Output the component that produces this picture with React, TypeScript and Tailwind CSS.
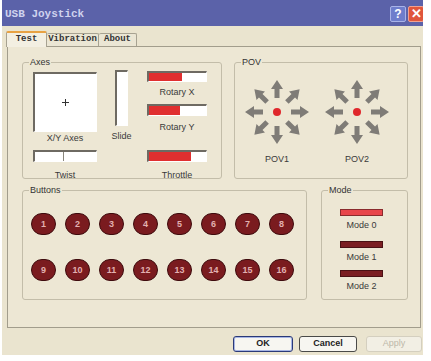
import React from 'react';

const axisLabel = "h-[10px] leading-[10px] text-[9px] text-[#3a3a3a] text-center whitespace-nowrap";

// sunken bar with red fill (rotary / throttle)
const Bar = ({ pct, className }: { pct: number; className: string }) => (
  <div className={`${className} border-t-2 border-l-2 border-t-[#6e6a62] border-l-[#6e6a62] border-b border-r border-b-white border-r-white bg-white flex`}>
    <div className="h-full bg-[#e02f2f]" style={{ width: `${pct}%` }} />
  </div>
);

const Group = ({ title, className, children }: { title: string; className: string; children: React.ReactNode }) => (
  <fieldset className={`${className} border border-[#c3bda9] rounded-[3px] min-w-0`}>
    <legend className="ml-[6px] px-[1px] h-[10px] leading-[10px] text-[9px] text-[#333]">{title}</legend>
    {children}
  </fieldset>
);

const Pov = () => {
  const arrow = "M -2.5 -14 L 2.5 -14 L 2.5 -23 L 6 -23 L 0 -32 L -6 -23 L -2.5 -23 Z";
  return (
    <svg width="70" height="70" viewBox="-35 -35 70 70">
      {[0, 45, 90, 135, 180, 225, 270, 315].map((a) => (
        <path key={a} d={arrow} fill="#7f7c77" transform={`rotate(${a})`} />
      ))}
      <circle cx="0" cy="0" r="4" fill="#e0282c" />
    </svg>
  );
};

const Circle = ({ n }: { n: number }) => (
  <div className="w-[25px] h-[22px] rounded-full bg-[#7a1b1f] border border-[#3e0b0d] flex items-center justify-center text-[9px] font-bold text-[#e2b0b0] leading-none">
    {n}
  </div>
);

const ModeBar = ({ on }: { on?: boolean }) => (
  <div className={`w-[43px] h-[7px] border ${on ? 'bg-[#e8464b] border-[#8a2b2d]' : 'bg-[#7b1e22] border-[#4a1114]'}`} />
);

export default function App() {
  return (
    <div className="w-[431px] h-[361px] bg-white overflow-hidden font-['Liberation_Sans',Arial,sans-serif]">
      <div className="ml-[2px] w-[421px] h-[355px] bg-[#eae4cf] flex flex-col overflow-hidden">
        {/* title bar */}
        <div className="h-[26px] shrink-0 bg-[#5b62a9] flex items-center pl-[3px]">
          <span className="font-['Liberation_Mono',monospace] font-bold text-[11px] text-[#cfd2ee] mt-[3px]">USB Joystick</span>
          <div className="ml-auto mr-[-1px] flex items-center gap-[2px] mt-[1px]">
            <div className="w-[16px] h-[16px] rounded-[2px] bg-[#6e7dcc] border border-[#a9b3e8] flex items-center justify-center text-white font-bold text-[12px] leading-none">?</div>
            <div className="w-[16px] h-[16px] rounded-[2px] bg-[#e0563c] border border-[#f0a090] flex items-center justify-center text-white font-bold text-[13px] leading-none">✕</div>
          </div>
        </div>

        {/* tabs */}
        <div className="h-[20px] shrink-0 flex items-end pl-[4px] font-['Liberation_Mono',monospace] font-bold text-[9px] text-[#333]">
          <div className="relative z-10 w-[41px] h-[16px] mb-[-1px] bg-[#f3efe2] border-x border-[#a7a291] border-t-2 border-t-[#e8a243] rounded-t-[2px] flex items-center justify-center">Test</div>
          <div className="w-[52px] h-[13px] bg-[#ebe6d4] border-t border-r border-[#a7a291] rounded-t-[2px] flex items-center justify-center">Vibration</div>
          <div className="w-[38px] h-[13px] bg-[#ebe6d4] border-t border-r border-[#a7a291] rounded-t-[2px] flex items-center justify-center">About</div>
        </div>

        {/* tab panel */}
        <div className="ml-[5px] w-[414px] h-[282px] shrink-0 bg-[#ede7d4] border border-[#a29d8c] pl-[14px] pt-[10px] flex flex-col gap-[6px]">
          <div className="flex gap-[12px]">
            <Group title="Axes" className="w-[200px] h-[122px]">
              <div className="flex pl-[10px]">
                <div className="w-[64px] flex flex-col">
                  <div className="mt-[5px] h-[60px] bg-white border-t-2 border-l-2 border-t-[#6e6a62] border-l-[#6e6a62] border-b border-r border-b-white border-r-white flex items-center justify-center">
                    <svg width="7" height="7" viewBox="0 0 7 7"><path d="M3.5 0v7M0 3.5h7" stroke="#333" strokeWidth="1" /></svg>
                  </div>
                  <div className={`${axisLabel} mt-[1px]`}>X/Y Axes</div>
                  <div className="mt-[7px] h-[12px] border-t-2 border-l-2 border-t-[#6e6a62] border-l-[#6e6a62] border-b border-r border-b-white border-r-white bg-white flex">
                    <div className="w-[29px] h-full border-r border-[#8a867c]" />
                  </div>
                  <div className={`${axisLabel} mt-[8px]`}>Twist</div>
                </div>
                <div className="ml-[18px] w-[13px] flex flex-col items-center">
                  <div className="mt-[3px] w-[13px] h-[56px] bg-white border-t-2 border-l-2 border-t-[#6e6a62] border-l-[#6e6a62] border-b border-r border-b-white border-r-white" />
                  <div className={`${axisLabel} mt-[5px]`}>Slide</div>
                </div>
                <div className="ml-[19px] w-[60px] flex flex-col">
                  <Bar pct={58} className="mt-[4px] h-[11px]" />
                  <div className={`${axisLabel} mt-[5px]`}>Rotary X</div>
                  <Bar pct={55} className="mt-[7px] h-[12px]" />
                  <div className={`${axisLabel} mt-[6px]`}>Rotary Y</div>
                  <Bar pct={74} className="mt-[18px] h-[12px]" />
                  <div className={`${axisLabel} mt-[8px]`}>Throttle</div>
                </div>
              </div>
            </Group>
            <Group title="POV" className="w-[174px] h-[122px]">
              <div className="flex pl-[7px] gap-[10px] mt-[10px]">
                {['POV1', 'POV2'].map((t) => (
                  <div key={t} className="w-[70px] flex flex-col items-center">
                    <Pov />
                    <div className={`${axisLabel} mt-[7px]`}>{t}</div>
                  </div>
                ))}
              </div>
            </Group>
          </div>

          <div className="flex gap-[14px]">
            <Group title="Buttons" className="w-[285px] h-[115px]">
              <div className="pl-[8px] pt-[18px] flex flex-col gap-[24px]">
                <div className="flex gap-[9px]">
                  {[1, 2, 3, 4, 5, 6, 7, 8].map((n) => <Circle key={n} n={n} />)}
                </div>
                <div className="flex gap-[9px]">
                  {[9, 10, 11, 12, 13, 14, 15, 16].map((n) => <Circle key={n} n={n} />)}
                </div>
              </div>
            </Group>
            <Group title="Mode" className="w-[87px] h-[115px]">
              <div className="pl-[18px] pt-[14px] w-[61px] flex flex-col items-center">
                <ModeBar on />
                <div className={`${axisLabel} mt-[4px]`}>Mode 0</div>
                <div className="mt-[11px]"><ModeBar /></div>
                <div className={`${axisLabel} mt-[4px]`}>Mode 1</div>
                <div className="mt-[8px]"><ModeBar /></div>
                <div className={`${axisLabel} mt-[4px]`}>Mode 2</div>
              </div>
            </Group>
          </div>
        </div>

        {/* dialog buttons */}
        <div className="mt-[8px] flex justify-end pr-[1px] text-[9px] font-bold">
          <button className="w-[60px] h-[16px] rounded-[3px] border border-[#2b3a78] bg-[#f7f6f1] shadow-[inset_0_0_0_1px_#a8b6e4] text-[#222]">OK</button>
          <button className="ml-[6px] w-[58px] h-[16px] rounded-[3px] border border-[#4a4a48] bg-[#f7f6f1] text-[#222]">Cancel</button>
          <button className="ml-[9px] w-[56px] h-[16px] rounded-[3px] border border-[#d4cfbf] bg-[#f2efe4] text-[#bdb8a9] font-normal">Apply</button>
        </div>
      </div>
    </div>
  );
}
